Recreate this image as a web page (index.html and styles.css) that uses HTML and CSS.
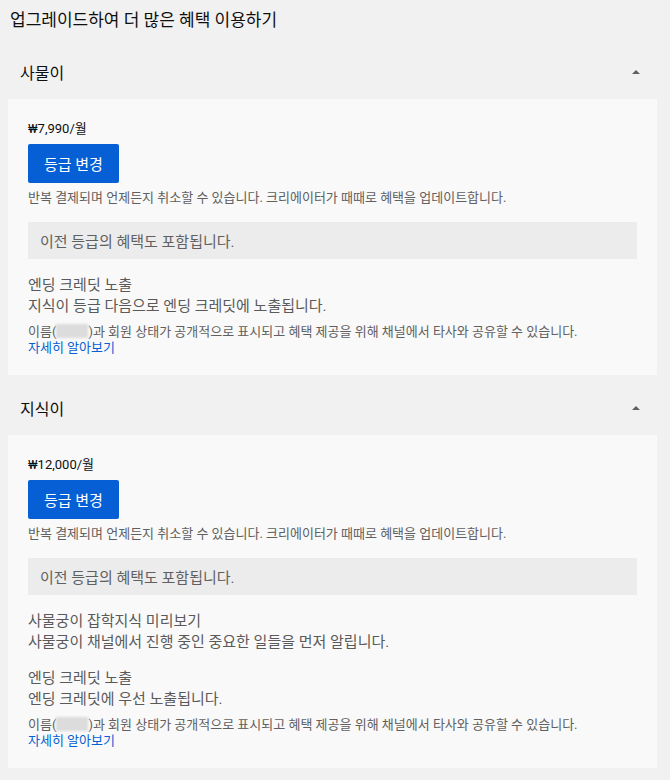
FILE: index.html
```html
<!DOCTYPE html>
<html>
	<head>
		<meta charset = "utf-8">
		<title>멤버십 등급</title>
		
		<link rel="stylesheet" href="styles.css">
	</head>
	<body>
	
		<div class = "page">
			<h3 class = "page-title">업그레이드하여 더 많은 혜택 이용하기</h3>
			
			<div class = "tier">
				<div class = "tier-head">
					<span class = "tier-name">사물이</span>
					<svg class = "tier-arrow" width = "16" height = "16" viewBox = "0 0 16 16">
						<polygon points = "4,10 8,6 12,10" fill = "#606060"/>
					</svg>
				</div>
				<div class = "tier-card">
					<div class = "tier-price">₩7,990/월</div>
					<button class = "tier-button">등급 변경</button>
					<div class = "tier-note">반복 결제되며 언제든지 취소할 수 있습니다. 크리에이터가 때때로 혜택을 업데이트합니다.</div>
					<div class = "tier-included">이전 등급의 혜택도 포함됩니다.</div>
					<div class = "perk">
						<div>엔딩 크레딧 노출</div>
						<div>지식이 등급 다음으로 엔딩 크레딧에 노출됩니다.</div>
					</div>
					<div class = "perk-privacy">
						이름(<span class = "hidden-name"></span>)과 회원 상태가 공개적으로 표시되고 혜택 제공을 위해 채널에서 타사와 공유할 수 있습니다.
						<br/>
						<a class = "perk-link" href = "#">자세히 알아보기</a>
					</div>
				</div>
			</div>
			
			<div class = "tier">
				<div class = "tier-head">
					<span class = "tier-name">지식이</span>
					<svg class = "tier-arrow" width = "16" height = "16" viewBox = "0 0 16 16">
						<polygon points = "4,10 8,6 12,10" fill = "#606060"/>
					</svg>
				</div>
				<div class = "tier-card">
					<div class = "tier-price">₩12,000/월</div>
					<button class = "tier-button">등급 변경</button>
					<div class = "tier-note">반복 결제되며 언제든지 취소할 수 있습니다. 크리에이터가 때때로 혜택을 업데이트합니다.</div>
					<div class = "tier-included">이전 등급의 혜택도 포함됩니다.</div>
					<div class = "perk">
						<div>사물궁이 잡학지식 미리보기</div>
						<div>사물궁이 채널에서 진행 중인 중요한 일들을 먼저 알립니다.</div>
					</div>
					<div class = "perk">
						<div>엔딩 크레딧 노출</div>
						<div>엔딩 크레딧에 우선 노출됩니다.</div>
					</div>
					<div class = "perk-privacy">
						이름(<span class = "hidden-name"></span>)과 회원 상태가 공개적으로 표시되고 혜택 제공을 위해 채널에서 타사와 공유할 수 있습니다.
						<br/>
						<a class = "perk-link" href = "#">자세히 알아보기</a>
					</div>
				</div>
			</div>
		</div>
		
	</body>
	
</html>
```

FILE: styles.css
```css
body {
	margin: 0;
	background: #f1f1f1;
	font-family: Roboto, "Noto Sans CJK KR", sans-serif;
	color: #0f0f0f;
}

.page {
	padding: 0 13px 0 8px;
}

.page-title {
	margin: 0;
	padding: 10px 2px 15px;
	font-size: 17px;
	font-weight: normal;
	line-height: 20px;
}

.tier {
	margin-bottom: 6px;
}

.tier-head {
	display: flex;
	align-items: center;
	justify-content: space-between;
	height: 54px;
	padding: 0 13px 0 12px;
}

.tier-name {
	font-size: 16px;
}

.tier-card {
	background: #f9f9f9;
	padding: 20px 20px 19px;
}

.tier-price {
	font-size: 13px;
	line-height: 18px;
	margin-top: 1px;
	margin-bottom: -1px;
}

.tier-button {
	display: block;
	margin-top: 7px;
	height: 39px;
	padding: 0 16px;
	border: none;
	border-radius: 2px;
	background: #065fd4;
	color: #ffffff;
	font-family: inherit;
	font-size: 15px;
}

.tier-note {
	margin-top: 7px;
	font-size: 13px;
	line-height: 16px;
	color: #606060;
}

.tier-included {
	display: flex;
	align-items: center;
	margin-top: 16px;
	height: 37px;
	padding: 0 12px;
	background: #ececec;
	font-size: 15px;
	color: #606060;
}

.perk {
	margin-top: 16px;
	font-size: 15px;
	line-height: 21px;
	color: #5a5a5a;
}

.perk + .perk {
	margin-top: 15px;
}

.perk-privacy {
	margin-top: 7px;
	font-size: 13px;
	line-height: 16px;
	color: #606060;
}

.hidden-name {
	display: inline-block;
	width: 32px;
	height: 14px;
	vertical-align: -2px;
	background: #dcdcdc;
	filter: blur(1px);
}

.perk-link {
	color: #065fd4;
	text-decoration: none;
}
```
